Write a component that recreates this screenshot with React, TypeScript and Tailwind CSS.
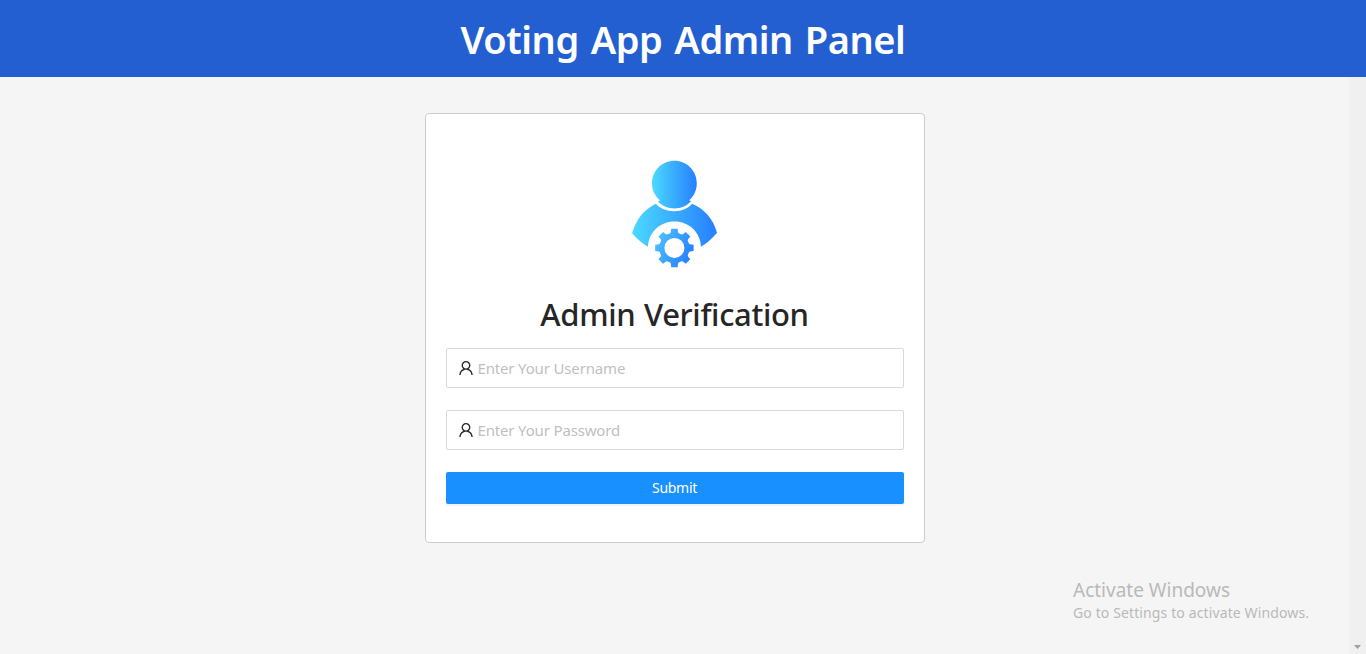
import { AiOutlineUser } from 'react-icons/ai';

const gearPath = (() => {
  const points: string[] = [];
  const add = (r: number, deg: number) => {
    const a = (deg * Math.PI) / 180;
    points.push(`${(54.4 + r * Math.sin(a)).toFixed(2)},${(97.9 - r * Math.cos(a)).toFixed(2)}`);
  };
  for (let i = 0; i < 8; i++) {
    const d = i * 45;
    add(15.2, d - 16.5);
    add(16.1, d - 13);
    add(19.5, d - 9.5);
    add(19.5, d + 9.5);
    add(16.1, d + 13);
    add(15.2, d + 16.5);
  }
  return `M${points.join('L')}ZM64.4,97.9A10,10 0 1 0 44.4,97.9A10,10 0 1 0 64.4,97.9Z`;
})();

function AdminLogo() {
  return (
    <svg className="block h-[125px] w-[110px]" viewBox="0 0 110 125" fill="none">
      <defs>
        <linearGradient id="body" gradientUnits="userSpaceOnUse" x1="12" y1="0" x2="97" y2="0">
          <stop stopColor="#4cd9ff" />
          <stop offset="1" stopColor="#267fff" />
        </linearGradient>
        <linearGradient id="head" gradientUnits="userSpaceOnUse" x1="32" y1="0" x2="77" y2="0">
          <stop stopColor="#4cd9ff" />
          <stop offset="1" stopColor="#267fff" />
        </linearGradient>
        <linearGradient id="gear" gradientUnits="userSpaceOnUse" x1="37" y1="88" x2="72" y2="106">
          <stop stopColor="#4bc0ff" />
          <stop offset="1" stopColor="#267fff" />
        </linearGradient>
      </defs>
      <path
        fill="url(#head)"
        d="M54.4 10.8C66.8 10.8 76.8 20.8 76.8 33.4C76.8 40 73.9 46 69.2 50.2L71 51.2C66.4 56 60.6 58.4 54.4 58.4C48.2 58.4 42.4 56 37.8 51.2L40.2 50.4C35.1 46.2 32 40.2 32 33.4C32 20.8 42 10.8 54.4 10.8Z"
      />
      <path
        fill="url(#body)"
        d="M35.8 53.8C40.4 58.5 46.5 61.2 54.2 61.2C61.9 61.2 67.6 58.5 72.2 53.8C84.7 59.2 93.2 68.9 97 82.8C92 88.7 86.8 93.3 80.9 96.8C80.6 82.4 69 71.6 54.5 71.6C40 71.6 28.6 82.4 28 96.8C22 93.4 16.9 88.8 12.1 83.2C16 69.7 23.8 59.6 35.8 53.8Z"
      />
      <path fill="url(#gear)" fillRule="evenodd" d={gearPath} />
    </svg>
  );
}

function Field({ type, placeholder }: { type: string; placeholder: string }) {
  return (
    <label className="mb-[22px] flex h-10 items-center gap-1 rounded-[2px] border border-[#d9d9d9] bg-white px-[11px] text-[#262626]">
      <AiOutlineUser className="size-4 shrink-0" viewBox="64 64 896 896" />
      <input
        type={type}
        placeholder={placeholder}
        className="w-full bg-transparent text-[15px] leading-6 tracking-[-0.16px] outline-none placeholder:text-[#bfbfbf]"
      />
    </label>
  );
}

export default function App() {
  return (
    <div className="flex h-screen flex-col overflow-hidden bg-[#f5f5f5] font-['Noto_Sans','Open_Sans',sans-serif]">
      <header className="flex h-[77px] shrink-0 items-center justify-center bg-[#235fd1]">
        <h1 className="whitespace-nowrap text-[38px] leading-[48px] font-semibold tracking-[-0.45px] [word-spacing:2.5px] text-white">
          Voting App Admin Panel
        </h1>
      </header>
      <div className="flex min-h-0 flex-1">
        <main className="relative flex-1 pt-9">
          <section className="mx-auto h-[430px] w-[500px] rounded-[4px] border border-[#cccccc] bg-white px-5 pt-9">
            <div className="flex justify-center">
              <AdminLogo />
            </div>
            <h2 className="mt-[17px] mb-3 text-center text-[31px] leading-[44px] font-medium tracking-[-0.34px] [word-spacing:1px] whitespace-nowrap text-[#262626]">
              Admin Verification
            </h2>
            <form onSubmit={(e) => e.preventDefault()}>
              <Field type="text" placeholder="Enter Your Username" />
              <Field type="password" placeholder="Enter Your Password" />
              <button
                type="submit"
                className="block h-8 w-full rounded-[2px] bg-[#1890ff] text-[14px] leading-8 tracking-[-0.3px] text-white shadow-[0_2px_0_rgba(0,0,0,0.045)]"
              >
                Submit
              </button>
            </form>
          </section>
          <aside className="absolute top-[501px] left-[1073px] whitespace-nowrap text-[#b9b9b9]">
            <p className="text-[19px] leading-6">Activate Windows</p>
            <p className="text-[14px] leading-[22px] tracking-[0.12px]">Go to Settings to activate Windows.</p>
          </aside>
        </main>
        <div className="flex w-[17px] items-end justify-center bg-[#f0f0f0] pb-[5px]">
          <svg className="h-1 w-[7px]" viewBox="0 0 7 4">
            <path d="M0 0H7L3.5 4Z" fill="#a0a0a0" />
          </svg>
        </div>
      </div>
    </div>
  );
}
